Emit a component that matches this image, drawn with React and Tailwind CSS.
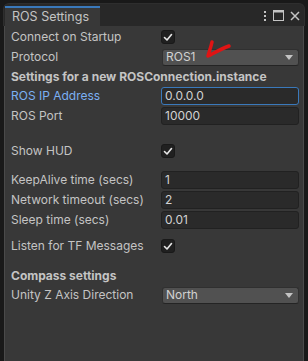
import { useState } from "react";

function Check({ on }) {
  return (
    <div className="w-[14px] h-[14px] rounded-[3px] bg-[#202020] border border-[#191919] flex items-center justify-center">
      {on && (
        <svg width="10" height="9" viewBox="0 0 10 9">
          <path d="M1.5 4.5 L4 7 L8.5 1.5" fill="none" stroke="#e6e6e6" strokeWidth="1.6" strokeLinecap="round" strokeLinejoin="round" />
        </svg>
      )}
    </div>
  );
}

function Row({ label, blue, children, className = "" }) {
  return (
    <div className={`flex items-center h-[18px] mb-[2px] ${className}`}>
      <div className={`w-[155px] shrink-0 pl-[5px] ${blue ? "text-[#7bb0f3]" : "text-[#c4c4c4]"}`}>{label}</div>
      <div className="flex-1 pr-[3px] flex items-center">{children}</div>
    </div>
  );
}

function Field({ value, focused }) {
  return (
    <div
      className={`w-full h-[18px] rounded-[3px] bg-[#2a2a2a] border px-[3px] flex items-center text-[#d2d2d2] ${
        focused ? "border-[#3a79bb]" : "border-[#212121]"
      }`}
    >
      {value}
    </div>
  );
}

function Dropdown({ value }) {
  return (
    <div className="w-full h-[17px] ml-[1px] rounded-[3px] bg-[#515151] border border-[#303030] border-b-[#242424] px-[3px] flex items-center justify-between text-[#d2d2d2]">
      <span>{value}</span>
      <svg width="8" height="5" viewBox="0 0 8 5" className="mr-[2px]">
        <path d="M0 0 H8 L4 5 Z" fill="#c4c4c4" />
      </svg>
    </div>
  );
}

export default function App() {
  const [ip] = useState("0.0.0.0");

  return (
    <div
      className="w-[308px] h-[361px] bg-[#191919] pt-[3px] flex flex-col text-[12px] leading-none"
      style={{ fontFamily: "Inter, 'Noto Sans', sans-serif" }}
    >
      {/* tab bar */}
      <div className="h-[23px] mx-[3px] rounded-t-[6px] bg-[#282828] border-t border-x border-[#2e2e2e] flex items-end shrink-0">
        <div className="h-[20px] w-[95px] ml-[1px] bg-[#383838] border-t-2 border-[#3a79bb] flex items-center pl-[7px] text-[#c4c4c4] text-[12.5px]">
          ROS Settings
        </div>
        <div className="flex-1" />
        <div className="flex items-center gap-[6px] h-full pr-[4px] pt-[1px]">
          <svg width="4" height="12" viewBox="0 0 4 12">
            <rect x="1" y="1" width="2" height="2" fill="#c4c4c4" />
            <rect x="1" y="5" width="2" height="2" fill="#c4c4c4" />
            <rect x="1" y="9" width="2" height="2" fill="#c4c4c4" />
          </svg>
          <svg width="11" height="11" viewBox="0 0 11 11">
            <rect x="0.5" y="0.5" width="10" height="10" fill="none" stroke="#c4c4c4" />
            <rect x="0.5" y="0.5" width="10" height="2" fill="#c4c4c4" />
          </svg>
          <svg width="10" height="10" viewBox="0 0 10 10">
            <path d="M1 1 L9 9 M9 1 L1 9" stroke="#c4c4c4" strokeWidth="1.5" />
          </svg>
        </div>
      </div>

      {/* panel */}
      <div className="relative flex-1 mx-[4px] bg-[#383838] border-x border-[#4a4a4a] px-[1px] pt-[2px]">
        <Row label="Connect on Startup">
          <Check on />
        </Row>
        <Row label="Protocol">
          <Dropdown value="ROS1" />
        </Row>
        <div className="h-[18px] mt-[1px] mb-[1px] flex items-center pl-[5px] font-bold text-[#c4c4c4]">
          Settings for a new ROSConnection.instance
        </div>
        <Row label="ROS IP Address" blue>
          <Field value={ip} focused />
        </Row>
        <Row label="ROS Port">
          <Field value="10000" />
        </Row>

        <Row label="Show HUD" className="mt-[17px]">
          <Check on />
        </Row>

        <Row label="KeepAlive time (secs)" className="mt-[11px]">
          <Field value="1" />
        </Row>
        <Row label="Network timeout (secs)">
          <Field value="2" />
        </Row>
        <Row label="Sleep time (secs)">
          <Field value="0.01" />
        </Row>

        <Row label="Listen for TF Messages" className="mt-[8px]">
          <Check on />
        </Row>

        <div className="h-[18px] mt-[12px] mb-[1px] flex items-center pl-[5px] font-bold text-[#c4c4c4]">
          Compass settings
        </div>
        <Row label="Unity Z Axis Direction">
          <Dropdown value="North" />
        </Row>

        {/* red annotation stroke */}
        <svg className="absolute left-[196px] top-[12px]" width="34" height="24" viewBox="0 0 34 24">
          <path d="M11 4 C10 9 8 14 7 18 C13 15 20 11 28 8" fill="none" stroke="#e01414" strokeWidth="3.5" strokeLinecap="round" strokeLinejoin="round" />
        </svg>
      </div>
    </div>
  );
}
